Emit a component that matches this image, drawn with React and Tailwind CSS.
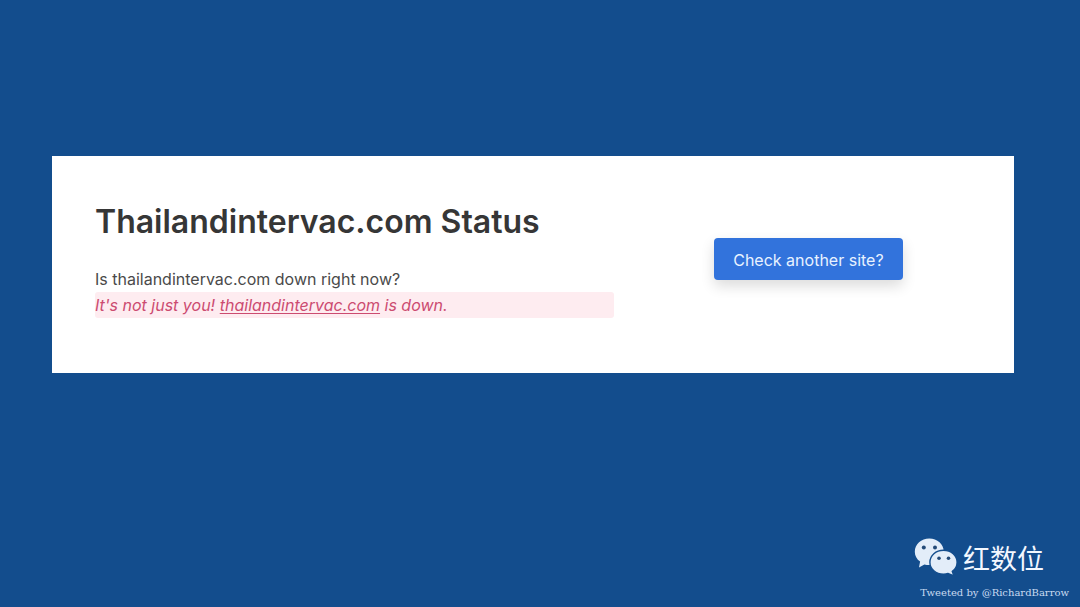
function ChatBubbles() {
  return (
    <svg viewBox="0 0 43 38" className="h-[38px] w-[43px]" aria-hidden="true">
      <path
        fill="#e3edf9"
        d="M15.300 .6C7.300 .6 .8 6.300 .8 13.700c0 4 2 7.500 5.300 9.900L5 29.600l5.400-3.100c1.500.4 3.200.6 4.900.6 8 0 14.500-6 14.500-13.400S23.300.6 15.300.6Z"
      />
      <path
        fill="#e3edf9"
        stroke="#134d8d"
        strokeWidth="1.400"
        d="M29.500 12.200c-7.600 0-13.600 5.300-13.600 12s6 12 13.600 12c1.600 0 3.200-.2 4.600-.7l5.800 2.300-1.600-4.400c3.100-2.200 4.800-5.400 4.800-9.200 0-6.700-6-12-13.600-12Z"
      />
      <g fill="#234a78">
        <circle cx="9.800" cy="9.600" r="2" />
        <circle cx="21" cy="9.600" r="2" />
        <circle cx="25" cy="20.300" r="1.800" />
        <circle cx="34.500" cy="20.300" r="1.800" />
      </g>
    </svg>
  );
}

export default function App() {
  return (
    <div className="flex min-h-screen flex-col justify-between bg-[#134d8d] font-[Inter,sans-serif]">
      <main className="pt-[156px] pr-[66px] pl-[52px]">
        <section className="grid grid-cols-[4fr_3fr] bg-white pt-11 pr-[11px] pb-[55px] pl-[43px]">
          <div>
            <h1 className="text-[32px] leading-[44px] font-semibold text-[#363636]">
              Thailandintervac.com Status
            </h1>
            <div className="mt-[22px] text-[16px] leading-[26px]">
              <p className="text-[#4a4a4a]">Is thailandintervac.com down right now?</p>
              <p className="rounded-[3px] bg-[#feecf0] text-[#cc4b70] italic">
                It's not just you!{" "}
                <a href="#status" className="underline underline-offset-2">
                  thailandintervac.com
                </a>{" "}
                is down.
              </p>
            </div>
          </div>
          <div className="flex items-start justify-center pt-[38px]">
            <button
              type="button"
              className="rounded-[4px] bg-[#3273dc] px-[19px] pt-[10px] pb-2 text-[16px] leading-[24px] text-[#e8f2ff] shadow-[0_6px_14px_rgba(0,0,0,0.14)]"
            >
              Check another site?
            </button>
          </div>
        </section>
      </main>
      <footer className="flex flex-col items-end pb-2">
        <div className="flex items-start gap-[6px] pr-9">
          <ChatBubbles />
          <span className="font-['Noto_Sans_CJK_SC',sans-serif] text-[27px] leading-[40px] text-[#f3f8ff]">
            红数位
          </span>
        </div>
        <p className="mt-[9px] pr-[11px] font-['DejaVu_Serif',serif] text-[10px] leading-[12px] text-[#c9dbf1]">
          Tweeted by @RichardBarrow
        </p>
      </footer>
    </div>
  );
}
